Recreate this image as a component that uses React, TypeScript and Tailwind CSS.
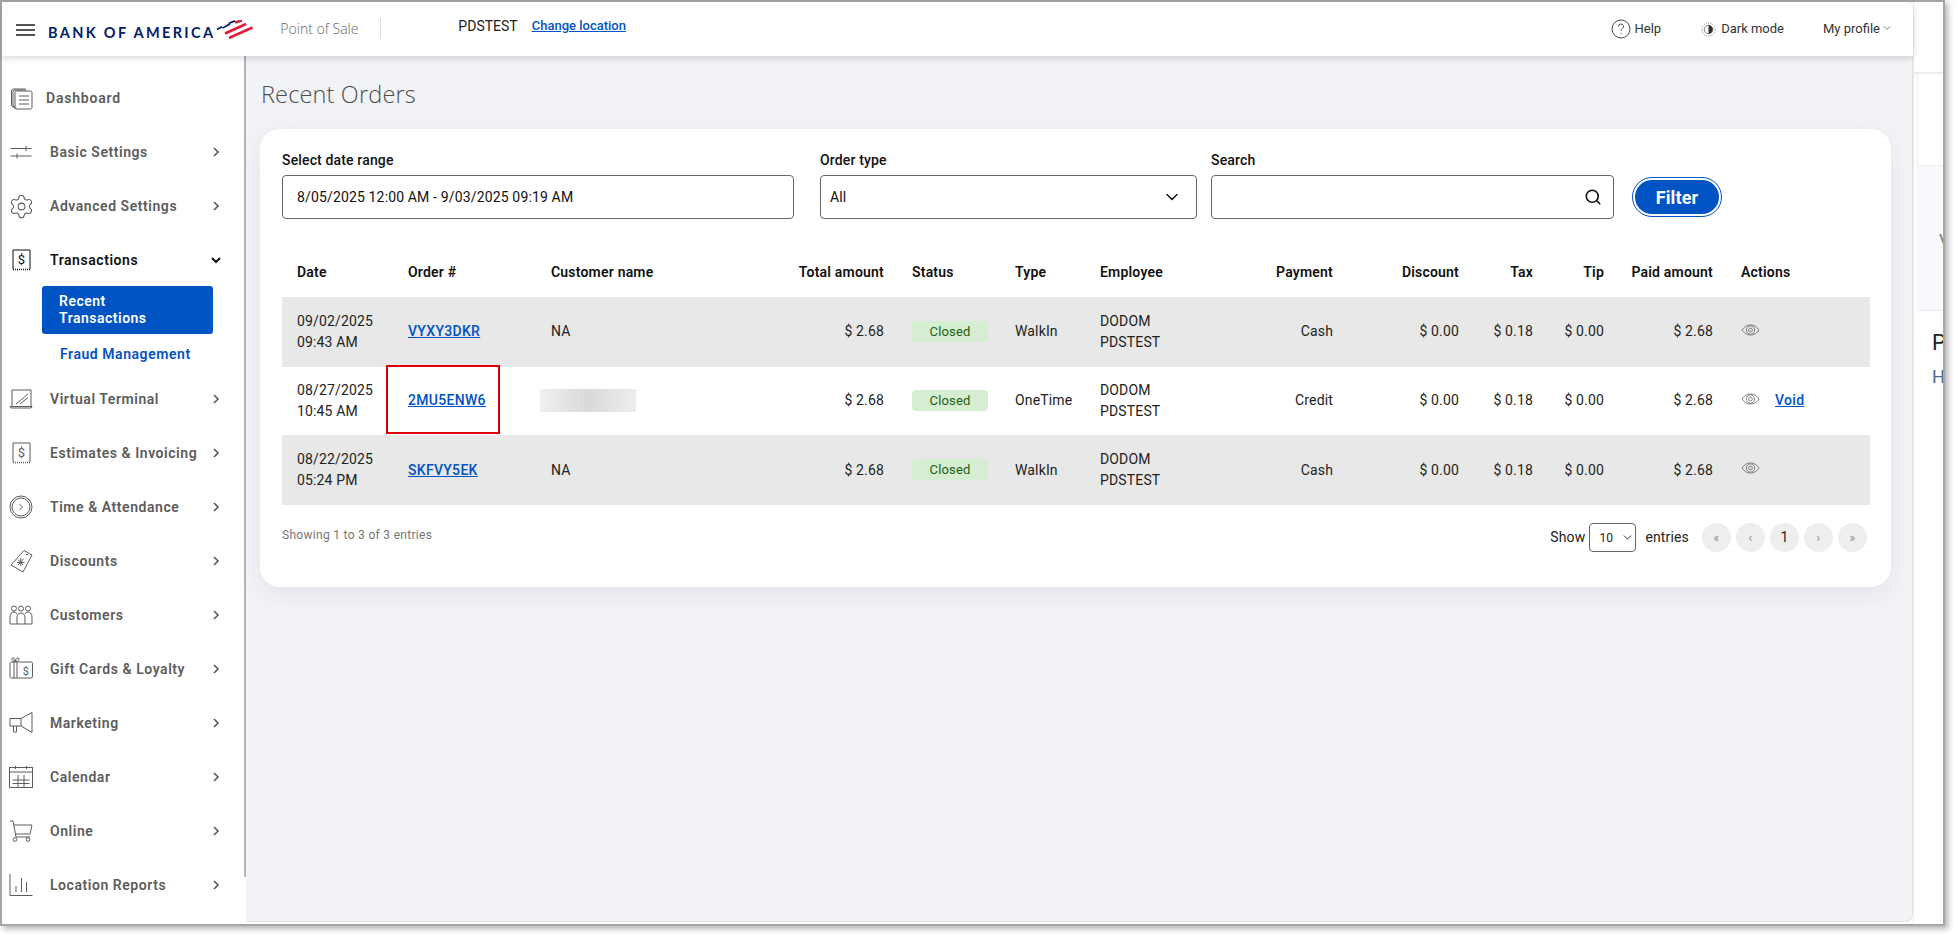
import { ChevronDown, Search, Settings } from 'lucide-react';
import type { ReactNode } from 'react';

const stroke = { fill: 'none', stroke: 'currentColor', strokeWidth: 1 };

function Icon({ children }: { children: ReactNode }) {
  return (
    <svg viewBox="0 0 24 24" className="w-6 h-6 shrink-0" {...stroke}>
      {children}
    </svg>
  );
}

function DollarDoc() {
  return (
    <Icon>
      <path d="M4 2h17v19" />
      <path d="M4 2v19" />
      <path d="M4 21.500h17" strokeDasharray="1 1" strokeWidth={1.500} />
      <text x="12.500" y="16" textAnchor="middle" fontSize="13" fontFamily="Roboto" fill="currentColor" stroke="none">$</text>
    </Icon>
  );
}

const icons: Record<string, ReactNode> = {
  dashboard: (
    <Icon>
      <path d="M6 20.500H3.500a2 2 0 0 1-1-1.500V5a2 2 0 0 1 2-2h12" />
      <path d="M7.500 22H5.500a2 2 0 0 1-1.500-2V6a2 2 0 0 1 2-2h11" />
      <rect x="6" y="5" width="17" height="18" rx="1.500" />
      <path d="M10 10h10M10 14h10M10 18h10" />
    </Icon>
  ),
  sliders: (
    <Icon>
      <path d="M1.500 8.500h21M1.500 16h21M17 6v5M8 13.500v5" />
    </Icon>
  ),
  gear: <Settings className="w-[27px] h-[27px] -mx-[1.500px] shrink-0" strokeWidth={0.900} />,
  doc: <DollarDoc />,
  terminal: (
    <Icon>
      <path d="M3 19V3h19v16" />
      <path d="M1 19.500h22l-1 1.500H2z" />
      <path d="M7 17 19 7M11 17l8-6.500" />
    </Icon>
  ),
  clock: (
    <Icon>
      <circle cx="12" cy="12" r="11" />
      <circle cx="12" cy="12" r="9" />
      <path d="m10.500 9 3 3-3 3" />
    </Icon>
  ),
  discount: (
    <Icon>
      <path d="M15 1.500 23 6l-9 17L2 16z" />
      <path d="M17 5.500h2" />
      <path d="M9 10.500l5 5.500M14.500 10 9 16M8 13.500h7.500M11.800 9v8" />
    </Icon>
  ),
  customers: (
    <Icon>
      <circle cx="5" cy="5.500" r="2.500" />
      <circle cx="12" cy="5.500" r="2.500" />
      <circle cx="19" cy="5.500" r="2.500" />
      <path d="M1 21v-6q0-6 4-6 2 0 3 2M23 21v-6q0-6-4-6-2 0-3 2" />
      <path d="M8 21v-6q0-5 4-5t4 5v6M1 21h22" />
    </Icon>
  ),
  gift: (
    <Icon>
      <rect x="1" y="5" width="22.500" height="16" rx="1.500" />
      <path d="M5 3v18M8 5v16" />
      <path d="M6.500 4.500C3 4.500 2 1 4 1s2.500 2 2.500 3.500c0-1.500.500-3.500 2.500-3.500s1 3.500-2.500 3.500z" />
      <text x="17" y="17.500" textAnchor="middle" fontSize="11" fontFamily="Roboto" fill="currentColor" stroke="none">$</text>
    </Icon>
  ),
  marketing: (
    <Icon>
      <rect x="1" y="7.500" width="11" height="7.500" />
      <path d="M12 7.500 23 1.500v20L12 15M4.500 15v6h3v-6" />
    </Icon>
  ),
  calendar: (
    <Icon>
      <rect x="0.500" y="2.500" width="23" height="20" />
      <path d="M0.500 7h23M6.500 1v3M17.500 1v3M3.500 15h17M3.500 18.500h17M9 10v12M15 10v12" />
    </Icon>
  ),
  cart: (
    <Icon>
      <path d="M1 2h3l3 16h14M5 6h18l-2 9H7" />
      <circle cx="6" cy="20.500" r="1.800" />
      <circle cx="19" cy="20.500" r="1.800" />
    </Icon>
  ),
  reports: (
    <Icon>
      <path d="M1 1v21.500h22.500" />
      <path d="M7 19v-6M12.500 19V5M17.500 19V9" />
    </Icon>
  ),
};

const navAbove = [
  { label: 'Basic Settings', icon: 'sliders' },
  { label: 'Advanced Settings', icon: 'gear' },
];

const navBelow = [
  { label: 'Virtual Terminal', icon: 'terminal' },
  { label: 'Estimates & Invoicing', icon: 'doc' },
  { label: 'Time & Attendance', icon: 'clock' },
  { label: 'Discounts', icon: 'discount' },
  { label: 'Customers', icon: 'customers' },
  { label: 'Gift Cards & Loyalty', icon: 'gift' },
  { label: 'Marketing', icon: 'marketing' },
  { label: 'Calendar', icon: 'calendar' },
  { label: 'Online', icon: 'cart' },
  { label: 'Location Reports', icon: 'reports' },
];

const orders = [
  { date: '09/02/2025', time: '09:43 AM', id: 'VYXY3DKR', type: 'WalkIn', payment: 'Cash', h: 'h-[70px]', bg: 'bg-[#e8e8e8]', lift: 'pb-[2px]' },
  { date: '08/27/2025', time: '10:45 AM', id: '2MU5ENW6', type: 'OneTime', payment: 'Credit', h: 'h-[68px]', bg: 'bg-white', lift: 'pb-[2px]', marked: true },
  { date: '08/22/2025', time: '05:24 PM', id: 'SKFVY5EK', type: 'WalkIn', payment: 'Cash', h: 'h-[70px]', bg: 'bg-[#e8e8e8]', lift: '' },
];

function NavChevron({ open }: { open?: boolean }) {
  return (
    <svg viewBox="0 0 10 10" className="w-[10px] h-[10px] ml-auto mr-[23px] shrink-0" fill="none" stroke="currentColor" strokeWidth={open ? 2 : 1.700}>
      <path d={open ? 'M1 3l4 4 4-4' : 'M3 1l4 4-4 4'} />
    </svg>
  );
}

function NavRow({ label, icon }: { label: string; icon: string }) {
  return (
    <div className="h-[54px] flex items-center pl-[7px] text-[#5c5c5c]">
      {icons[icon]}
      <span className="ml-[17px] text-[14px] font-semibold tracking-[0.55px] whitespace-nowrap">{label}</span>
      <NavChevron />
    </div>
  );
}

function Sidebar() {
  return (
    <aside className="w-[244px] shrink-0 bg-white rounded-bl-lg">
      <div className="h-[821px] border-r-2 border-[#b4b4b4] pt-[15px]">
        <div className="h-[54px] flex items-center pl-[7px] text-[#5c5c5c]">
          {icons.dashboard}
          <span className="ml-[13px] text-[14px] font-semibold tracking-[0.8px]">Dashboard</span>
        </div>
        {navAbove.map((item) => (
          <NavRow key={item.label} {...item} />
        ))}
        <div className="h-[54px] flex items-center pl-[7px] text-[#111]">
          {icons.doc}
          <span className="ml-[17px] text-[14px] font-semibold tracking-[0.55px]">Transactions</span>
          <NavChevron open />
        </div>
        <div className="-mt-px ml-[40px] w-[171px] h-[48px] bg-[#0053c2] rounded-[3px] pl-[17px] pt-[7px] text-white text-[14px] leading-[17px] font-semibold tracking-[0.5px]">
          Recent
          <br />
          Transactions
        </div>
        <div className="h-[38px] pt-[2px] flex items-center pl-[58px] text-[#0053c2] text-[14px] font-semibold tracking-[0.55px]">Fraud Management</div>
        {navBelow.map((item) => (
          <NavRow key={item.label} {...item} />
        ))}
      </div>
    </aside>
  );
}

function Flag() {
  return (
    <svg viewBox="0 0 37 19" className="w-[37px] h-[19px]" fill="none">
      <path d="M1 9.500 6 6.800M6.500 8 14 4M12.500 3.500 19 .8" stroke="#012169" strokeWidth="1.800" />
      <path d="M13 18 36.500 7.500M9 13.500 30 4M19 2.500l7-2" stroke="#e31837" strokeWidth="2.500" />
    </svg>
  );
}

function Header() {
  return (
    <header className="relative z-10 h-[54px] shrink-0 bg-white rounded-tr-lg shadow-[0_2px_7px_rgba(0,0,0,0.16)] flex items-center pl-[14px] pr-[20px] tracking-normal">
      <div className="w-[19px] flex flex-col gap-[3.500px] mt-[2px]">
        <div className="h-[1.500px] bg-[#555]" />
        <div className="h-[1.500px] bg-[#555]" />
        <div className="h-[1.500px] bg-[#555]" />
      </div>
      <span className="ml-[13px] mt-[8px] font-['Lato',sans-serif] font-bold text-[14.500px] tracking-[2.350px] text-[#012169] whitespace-nowrap">BANK OF AMERICA</span>
      <div className="ml-[1px]">
        <Flag />
      </div>
      <span className="ml-[27px] font-['Open_Sans',sans-serif] font-light text-[14px] text-[#666] w-[100px] -mt-[2px]">Point of Sale</span>
      <div className="w-px h-[21px] bg-[#dcdcdc] -mt-[2px]" />
      <span className="ml-[77px] -mt-[6px] text-[14px] text-[#222]">PDSTEST</span>
      <a className="ml-[14px] -mt-[6px] text-[13px] font-medium text-[#0053c2] underline">Change location</a>
      <div className="ml-auto flex items-center text-[13px] text-[#333]">
        <svg viewBox="0 0 20 20" className="w-5 h-5" fill="none" stroke="#333" strokeWidth="0.900">
          <circle cx="10" cy="10" r="9" />
          <path d="M7.500 7.500a2.500 2.500 0 1 1 3.700 2.200c-.8.500-1.200 1-1.200 2M10 14v1" />
        </svg>
        <span className="ml-[4px]">Help</span>
        <svg viewBox="0 0 16 16" className="ml-[40px] w-[15px] h-[15px]" fill="none" stroke="#777" strokeWidth="1">
          <circle cx="8" cy="8" r="4.500" />
          <path d="M8 3.500a4.500 4.500 0 0 1 0 9z" fill="#333" stroke="none" />
          <circle cx="8" cy="8" r="7" strokeDasharray="1 1.500" />
        </svg>
        <span className="ml-[5px]">Dark mode</span>
        <span className="ml-[39px]">My profile</span>
        <ChevronDown className="ml-[1px] -mt-[3px] w-[12px] h-[12px] text-[#555]" strokeWidth={1.500} />
      </div>
    </header>
  );
}

function Eye() {
  return (
    <svg viewBox="0 0 20 13" className="w-[19px] h-[12px] text-[#777]" fill="none" stroke="currentColor" strokeWidth="1">
      <path d="M.8 6.500C3 3 6.300 1 10 1s7 2 9.200 5.500C17 10 13.700 12 10 12S3 10 .8 6.500z" />
      <circle cx="10" cy="6.500" r="4.500" />
      <circle cx="10" cy="6.500" r="2" />
    </svg>
  );
}

function Field({ label, className, children }: { label: string; className: string; children: ReactNode }) {
  return (
    <div className={className}>
      <div className="h-[20px] leading-[20px] text-[14px] font-medium text-[#111]">{label}</div>
      <div className="mt-[5px] h-[44px] border border-[#666] rounded-[4px] bg-white flex items-center text-[14px] text-[#111]">{children}</div>
    </div>
  );
}

function Th({ className, children }: { className?: string; children: ReactNode }) {
  return <th className={`px-[15px] pt-[1px] text-[14px] font-semibold text-[#111] text-left whitespace-nowrap tracking-[0.2px] ${className ?? ''}`}>{children}</th>;
}

function OrdersTable() {
  const right = 'px-[15px] text-right';
  return (
    <table className="mt-[27px] w-[1588px] table-fixed border-collapse text-[14px] text-[#222]">
      <colgroup>
        {[111, 143, 236, 125, 103, 85, 155, 108, 126, 74, 71, 109, 142].map((w, i) => (
          <col key={i} style={{ width: w }} />
        ))}
      </colgroup>
      <thead>
        <tr className="h-[51px]">
          <Th>Date</Th>
          <Th>Order #</Th>
          <Th>Customer name</Th>
          <Th className="!text-right !pr-[13px]">Total amount</Th>
          <Th>Status</Th>
          <Th>Type</Th>
          <Th>Employee</Th>
          <Th className="!text-right">Payment</Th>
          <Th className="!text-right">Discount</Th>
          <Th className="!text-right">Tax</Th>
          <Th className="!text-right">Tip</Th>
          <Th className="!text-right !pl-[5px]">Paid amount</Th>
          <Th className="!pl-[13px]">Actions</Th>
        </tr>
      </thead>
      <tbody>
        {orders.map((o) => (
          <tr key={o.id} className={`${o.h} ${o.bg} leading-[21px]`}>
            <td className="px-[15px]">
              {o.date}
              <br />
              {o.time}
            </td>
            <td className={`relative px-[15px] ${o.lift}`}>
              <a className="text-[#0053c2] font-medium underline tracking-[0.3px]">{o.id}</a>
              {o.marked && <div className="absolute left-[-7px] top-[-2px] w-[114px] h-[69px] border-2 border-[#e00000]" />}
            </td>
            <td className={`px-[15px] ${o.lift}`}>
              {o.marked ? <div className="-ml-[11px] w-[96px] h-[23px] bg-gradient-to-r from-[#f0f0f0] via-[#d9d9d9] to-[#ededed]" /> : 'NA'}
            </td>
            <td className={`${right} !pr-[13px] ${o.lift}`}>$ 2.68</td>
            <td className="px-[15px] pb-[2px]">
              <div className="w-[76px] h-[21px] bg-[#d5edd0] rounded-[4px] text-[#1f5f12] text-[13px] leading-[21px] text-center">Closed</div>
            </td>
            <td className={`px-[15px] ${o.lift}`}>{o.type}</td>
            <td className="px-[15px]">
              DODOM
              <br />
              PDSTEST
            </td>
            <td className={`${right} ${o.lift}`}>{o.payment}</td>
            <td className={`${right} ${o.lift}`}>$ 0.00</td>
            <td className={`${right} ${o.lift}`}>$ 0.18</td>
            <td className={`${right} ${o.lift}`}>$ 0.00</td>
            <td className={`${right} ${o.lift}`}>$ 2.68</td>
            <td className="pl-[13px]">
              <div className="flex items-center -mt-[5px]">
                <Eye />
                {o.marked && <a className="ml-[15px] mt-[3px] text-[#0053c2] font-medium underline tracking-[0.3px]">Void</a>}
              </div>
            </td>
          </tr>
        ))}
      </tbody>
    </table>
  );
}

function Pagination() {
  return (
    <div className="flex items-center gap-[5px] ml-[13px]">
      {['«', '‹', '1', '›', '»'].map((p) => (
        <div key={p} className={`w-[29px] h-[29px] rounded-full bg-[#eeeeee] flex items-center justify-center ${p === '1' ? 'text-[14px] text-[#222]' : 'text-[12px] text-[#8a8a8a]'}`}>
          {p}
        </div>
      ))}
    </div>
  );
}

function Main() {
  return (
    <main className="flex-1 bg-[#f2f3f7] border-r border-b border-[#e0e0e0] rounded-br-lg pl-[14px] pr-[21px] pt-[22px]">
      <h1 className="ml-px font-['Open_Sans',sans-serif] text-[23.500px] leading-[32px] font-light text-[#4d4d4d] mb-[19px]">Recent Orders</h1>
      <section className="bg-white rounded-[20px] shadow-[0_8px_24px_rgba(30,40,70,0.07)] pt-[21px] pb-[35px] pl-[22px] pr-[21px]">
        <div className="flex">
          <Field label="Select date range" className="w-[512px]">
            <span className="pl-[14px]">8/05/2025 12:00 AM - 9/03/2025 09:19 AM</span>
          </Field>
          <Field label="Order type" className="w-[377px] ml-[26px]">
            <span className="pl-[9px]">All</span>
            <ChevronDown className="ml-auto mr-[14px] w-[20px] h-[20px] text-[#111]" strokeWidth={1.800} />
          </Field>
          <Field label="Search" className="w-[403px] ml-[14px]">
            <Search className="ml-auto mr-[11px] w-[18px] h-[18px] text-[#111]" strokeWidth={2.200} />
          </Field>
          <button className="ml-[19px] mt-[28px] w-[88px] h-[38px] rounded-full bg-[#0053c2] border-2 border-white outline outline-1 outline-[#0053c2] text-white text-[18px] font-bold">Filter</button>
        </div>
        <OrdersTable />
        <div className="mt-[18px] flex justify-between pr-[3px]">
          <div className="text-[12px] text-[#757575] tracking-[0.3px] pt-[3px]">Showing 1 to 3 of 3 entries</div>
          <div className="flex items-center text-[14px] text-[#222]">
            <span>Show</span>
            <div className="ml-[4px] w-[47px] h-[29px] border border-[#666] rounded-[4px] flex items-center pl-[9px] text-[12px]">
              10
              <ChevronDown className="ml-auto mr-[1px] w-[13px] h-[13px]" strokeWidth={1.800} />
            </div>
            <span className="ml-[9px]">entries</span>
            <Pagination />
          </div>
        </div>
      </section>
    </main>
  );
}

function SideStrip() {
  return (
    <div className="flex-1 flex flex-col overflow-hidden bg-white border-l border-[#ececec]">
      <div className="h-[72px] shrink-0 border-b-2 border-[#ececec]" />
      <div className="h-[92px] shrink-0 ml-[3px] border-l border-b border-[#ececec]" />
      <div className="h-[145px] shrink-0 ml-[3px] bg-[#f7f9fc] border-b border-[#e8e8e8] flex items-center pl-[22px] pt-[6px] text-[17px] text-[#777] whitespace-nowrap">
        V
      </div>
      <div className="ml-[18px] mt-[18px] text-[22px] leading-[28px] text-[#222]">P</div>
      <div className="ml-[18px] mt-[8px] text-[18px] leading-[24px] text-[#4a6a9a]">H</div>
    </div>
  );
}

export default function App() {
  return (
    <div className="relative h-[938px] w-[1957px] overflow-hidden bg-white font-['Roboto',sans-serif] tracking-[0.15px]">
      <div className="h-[926px] w-[1945px] border-2 border-[#a6a6a6] flex shadow-[3px_3px_6px_rgba(0,0,0,0.3)]">
        <div className="w-[1911px] shrink-0 flex flex-col h-[920px] bg-white">
          <Header />
          <div className="flex-1 flex min-h-0">
            <Sidebar />
            <Main />
          </div>
        </div>
        <SideStrip />
      </div>
      {/* mouse pointer caught in the capture */}
      <svg viewBox="0 0 12 19" className="absolute left-[3px] top-[5px] w-[12px] h-[18px]" fill="#fff" stroke="#222" strokeWidth="1">
        <path d="M1 1v14l3.500-3 2.500 6 2.500-1-2.500-6H11z" />
      </svg>
    </div>
  );
}
